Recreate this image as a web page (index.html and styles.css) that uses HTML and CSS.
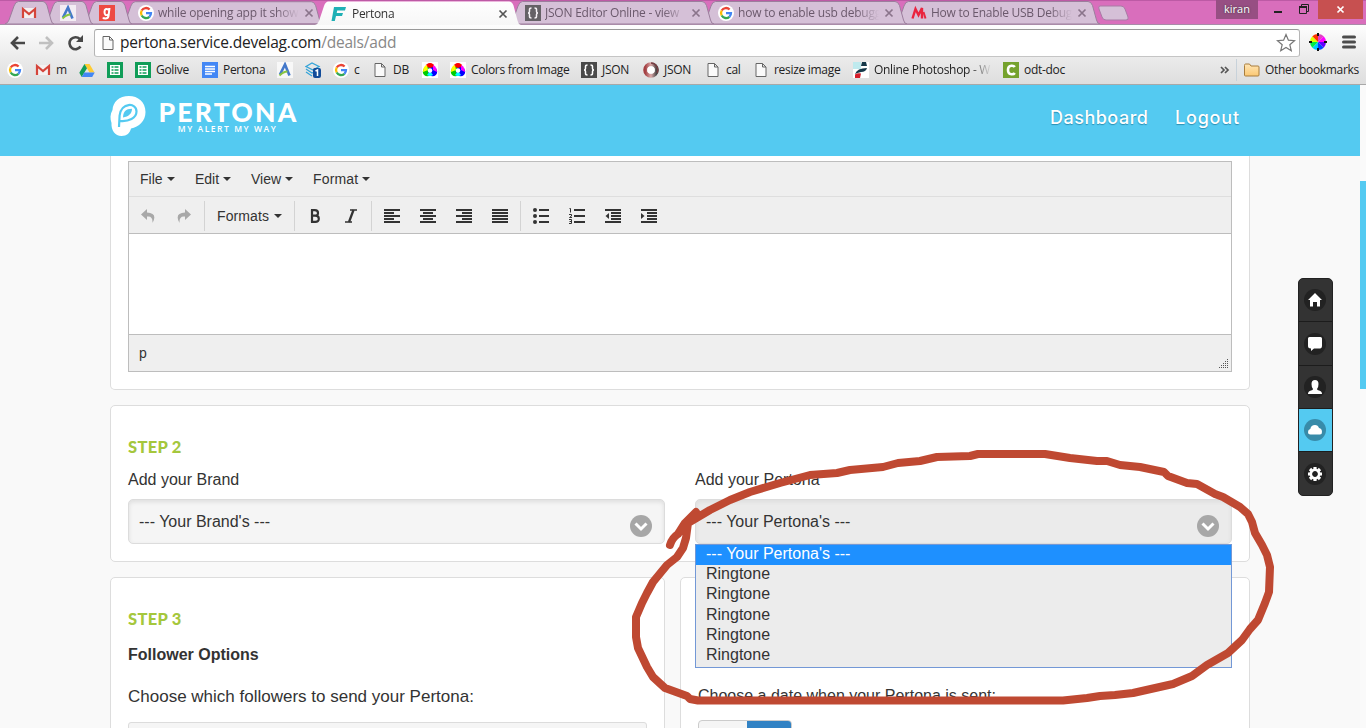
FILE: index.html
```html
<!DOCTYPE html>
<html lang="en">
<head>
<meta charset="utf-8">
<title>Pertona</title>
<link rel="stylesheet" href="styles.css">
</head>
<body>
<svg class="defs" aria-hidden="true">
  <defs>
    <linearGradient id="toolGrad" x2="0" y2="1"><stop stop-color="#fefefe"/><stop offset="1" stop-color="#f7f7f7"/></linearGradient>
    <linearGradient id="folderGrad" x2="0" y2="1"><stop stop-color="#ffe6b5"/><stop offset="1" stop-color="#fbc873"/></linearGradient>
    <linearGradient id="ringGrad"><stop stop-color="#a33f42"/><stop offset=".5" stop-color="#dba9a9"/><stop offset="1" stop-color="#444"/></linearGradient>
  </defs>
  <symbol id="google" viewBox="0 0 16 16"><circle cx="8" cy="8" r="8" fill="#fff"/><g fill="none" stroke-width="2.3"><path d="M11.6 4.5A5 5 0 0 0 3.7 5.5" stroke="#ea4335"/><path d="M3.7 5.5a5 5 0 0 0 0 5" stroke="#fbbc05"/><path d="M3.7 10.5a5 5 0 0 0 7.7 1.3" stroke="#34a853"/><path d="M11.4 11.8A5 5 0 0 0 13 8.1H8" stroke="#4285f4"/></g></symbol>
  <symbol id="gmail" viewBox="0 0 16 16"><path d="M2 3h12v10H2z" fill="#f4f0f0"/><path d="M2 13V4l6 5 6-5v9" fill="none" stroke="#d5443a" stroke-width="2.2"/></symbol>
  <symbol id="aicon" viewBox="0 0 16 16"><path d="M0 0h16v16H0z" fill="#fff" fill-opacity=".7"/><path d="M3 12.500 8 2.500l4.500 11" fill="none" stroke="#4378ca" stroke-width="2.600"/><path d="M2.500 13.500q4-4 8-4" fill="none" stroke="#87c540" stroke-width="2"/></symbol>
  <symbol id="gicon" viewBox="0 0 16 16"><path d="M0 0h16v16H0z" fill="#ee4a43"/><path d="M10.500 3 9.500 11q-.5 2.500-3 2.500-2 0-2.500-1M10 5Q5.500 2.500 5.500 7t4 2.500" fill="none" stroke="#fff" stroke-width="2"/></symbol>
  <symbol id="drive" viewBox="0 0 16 16"><path d="M5.500 2h5l5 8.500h-5z" fill="#fc3"/><path d="M5.500 2 8 6.300 2.700 15 .3 10.800z" fill="#119d59"/><path d="M5.300 10.500h10.400L13.200 15H2.700z" fill="#4387f5"/></symbol>
  <symbol id="sheets" viewBox="0 0 16 16"><path d="M0 0h16v16H0z" fill="#109d58"/><path d="M3 3h10v10H3z" fill="#fff"/><path d="M4.500 5h2m1 0h4m-7 3h2m1 0h4m-7 3h2m1 0h4" stroke="#109d58" stroke-width="1.600"/></symbol>
  <symbol id="docs" viewBox="0 0 16 16"><path d="M0 0h16v16H0z" fill="#4387f5"/><path d="M3 4.500h10M3 7h10M3 9.500h10M3 12h7" stroke="#fff" stroke-width="1.400"/></symbol>
  <symbol id="stack" viewBox="0 0 16 16"><path d="M1 4.500 7 1l7 3.500L8 8zM1 7l6 4 2-1M1 10l6 4" fill="none" stroke="#34a4d8" stroke-width="1.300"/><rect x="8" y="6" width="8" height="10" rx="2" fill="#124c99"/><path d="m10.500 9 2-1v6" fill="none" stroke="#fff" stroke-width="1.500"/></symbol>
  <symbol id="page" viewBox="0 0 16 16"><path d="M3 1.500h6.500L13 5v9.500H3zM9.500 1.500V5H13" fill="#fafafa" stroke="#666"/></symbol>
  <symbol id="rgb" viewBox="0 0 16 16"><path d="M0 0h16v16H0z" fill="#fff"/><circle cx="8" cy="5.500" r="4.500" fill="#f00"/><circle cx="5.300" cy="9.700" r="4.500" fill="#0c0"/><circle cx="10.700" cy="9.700" r="4.500" fill="#00f"/><path d="M5 3Q1 4 1 10l5-2z" fill="#ff0"/><path d="M11 3q4 2 4 7l-4-2z" fill="#f0f"/><path d="M5 13q3 2 6 0l-3-4z" fill="#0ff"/><circle cx="8" cy="8.500" r="2.300" fill="#fff"/></symbol>
  <symbol id="json" viewBox="0 0 16 16"><path d="M0 0h16v16H0z" fill="#4a4a4a"/><path d="M6.500 3q-2 0-2 1.500v2Q4.500 8 3 8q1.500 0 1.500 1.500v2q0 1.500 2 1.500M9.500 3q2 0 2 1.500v2Q11.500 8 13 8q-1.500 0-1.500 1.500v2q0 1.500-2 1.500" fill="none" stroke="#fff" stroke-width="1.500"/></symbol>
  <symbol id="ring" viewBox="0 0 16 16"><circle cx="8" cy="8" r="5.800" fill="none" stroke="url(#ringGrad)" stroke-width="4"/><circle cx="8" cy="8" r="3.800" fill="#fff"/><path d="M8 1a7 7 0 0 1 6 10" fill="none" stroke="#783f43" stroke-width="1.500"/></symbol>
  <symbol id="photo" viewBox="0 0 16 16"><path d="M0 0h16v16H0z" fill="#fff"/><path d="M0 0h8v7H0z" fill="#bfeaee"/><path d="M9 0h4l1 4H8zM2 12q2-6 12-6-1 4-6 4-4 1-6 2z" fill="#153848"/><path d="M2 12.500q3-2 6-1L7 16H2z" fill="#d51f2c"/></symbol>
  <symbol id="camt" viewBox="0 0 16 16"><path d="M0 0h16v16H0z" fill="#75a22d"/><path d="M11.800 5q-1-1.500-3.300-1.300Q5 4 5 8t3.500 4.300q2.300.2 3.300-1.300" fill="none" stroke="#fff" stroke-width="2.600"/></symbol>
  <symbol id="folder" viewBox="0 0 16 16"><path d="M.5 3.500q0-1.500 1-1.500h4l1.500 2h7q1 0 1 1v8q0 1-1 1h-12.500q-1 0-1-1z" fill="url(#folderGrad)" stroke="#a97d3c"/></symbol>
  <symbol id="ficon" viewBox="0 0 16 16"><path d="M3 1h12l-1 3.500H6.200L5.700 7H12l-1 3H5L3.800 15H.5z" fill="#1eb0b5"/></symbol>
  <symbol id="micon" viewBox="0 0 16 16"><path d="M1.500 13.500 4.500 4 7.500 10 11 3v10.500" fill="none" stroke="#e9243f" stroke-width="2.400"/><path d="m12.500 7 2 6.500" stroke="#e9243f" stroke-width="2"/></symbol>
  <symbol id="close" viewBox="0 0 10 10"><path d="m1.500 1.500 7 7m0-7-7 7" fill="none" stroke="currentColor" stroke-width="1.700"/></symbol>
  <symbol id="pin" viewBox="0 0 49 24"><path d="M0 24q3-1 4-4l5-14q1.500-4.500 4.500-4.500H38q2.500 0 4 4l4 14.500q1 4 3 4z" fill="#d5c0d7" stroke="#9c7e9d"/></symbol>
  <symbol id="wide" viewBox="0 0 205 24"><path d="M0 24q3-1 4-4l5-14q1.500-4.500 4.500-4.500H193q3 0 4.500 4l4 14.500q1 4 3.500 4z" fill="#d5c0d7" stroke="#9c7e9d"/></symbol>
  <symbol id="chev" viewBox="0 0 22 22"><circle cx="11" cy="11" r="11" fill="#a7a7a7"/><path d="m5.500 8.500 5.500 5.500 5.500-5.500" fill="none" stroke="#fff" stroke-width="3"/></symbol>
</svg>

<header class="browser">
  <div class="tabstrip">
    <div class="tab pinned t1"><svg class="shape"><use href="#pin"/></svg><svg class="ico"><use href="#gmail"/></svg></div>
    <div class="tab pinned t2"><svg class="shape"><use href="#pin"/></svg><svg class="ico"><use href="#aicon"/></svg></div>
    <div class="tab pinned t3"><svg class="shape"><use href="#pin"/></svg><svg class="ico"><use href="#gicon"/></svg></div>
    <div class="tab t4"><svg class="shape"><use href="#wide"/></svg><svg class="ico"><use href="#google"/></svg><span class="title s-while">while opening app it show</span><svg class="x"><use href="#close"/></svg></div>
    <div class="tab active"><svg class="shape" viewBox="0 0 206 25"><path d="M0 25q3-1 4-4L9 6q1.500-4.500 4.500-4.500H194q3 0 4.500 4l4 15q1 4 3.500 4.500z" fill="url(#toolGrad)"/></svg><svg class="ico"><use href="#ficon"/></svg><span class="title s-pert">Pertona</span><svg class="x"><use href="#close"/></svg></div>
    <div class="tab t6"><svg class="shape"><use href="#wide"/></svg><svg class="ico dim"><use href="#json"/></svg><span class="title s-json">JSON Editor Online - view</span><svg class="x"><use href="#close"/></svg></div>
    <div class="tab t7"><svg class="shape"><use href="#wide"/></svg><svg class="ico"><use href="#google"/></svg><span class="title s-usb">how to enable usb debugg</span><svg class="x"><use href="#close"/></svg></div>
    <div class="tab t8"><svg class="shape"><use href="#wide"/></svg><svg class="ico"><use href="#micon"/></svg><span class="title s-how">How to Enable USB Debug</span><svg class="x"><use href="#close"/></svg></div>
    <svg class="newtab" viewBox="0 0 34 16"><path d="M3 1h21q3 0 4 3l3 8q1 3-2 3H9q-3 0-4-3L2 4Q1 1 3 1z" fill="#d5c0d7" stroke="#a97aa5"/></svg>
    <div class="winctl">
      <span class="user">kiran</span>
      <svg width="60" height="19"><path d="M16 12h8" stroke="#222" stroke-width="2"/><path d="M41.500 6.500h7v7h-7zM43.500 6V4.500h7v7H49" fill="none" stroke="#222"/><path d="M41 7h8" stroke="#222" stroke-width="2"/></svg>
      <span class="winclose"><svg width="10" height="10"><path d="m1.500 1.500 6 6m0-6-6 6" stroke="#fff" stroke-width="1.700"/></svg></span>
    </div>
  </div>

  <div class="addressbar">
    <svg class="nav" viewBox="0 0 94 30"><g fill="none" stroke-width="2.600"><path d="M25 17H12m6-6-6 6 6 6" stroke="#484848"/><path d="M39 17h13m-6-6 6 6-6 6" stroke="#c0c0c0"/><path d="M80.500 20.500A6 6 0 1 1 79.800 13" stroke="#484848"/></g><path d="M83 9v7h-7z" fill="#484848"/></svg>
    <div class="omnibox">
      <svg class="ico"><use href="#page"/></svg>
      <span class="url">pertona.service.develag.com<span class="path">/deals/add</span></span>
      <svg class="star" viewBox="0 0 20 20"><path d="m10 1.500 2.400 5.700 6.100.5-4.700 4 1.500 6-5.300-3.200-5.300 3.200 1.500-6-4.700-4 6.100-.5z" fill="#fff" stroke="#777" stroke-width="1.200"/></svg>
    </div>
    <svg class="wheel" viewBox="-10 -10 20 20"><path d="M0 0V-8A8 8 0 0 1 5.700-5.700z" fill="#e040c0"/><path d="M0 0 5.700-5.700A8 8 0 0 1 8 0z" fill="#f0f"/><path d="M0 0h8A8 8 0 0 1 5.700 5.700z" fill="#60f"/><path d="M0 0 5.700 5.700A8 8 0 0 1 0 8z" fill="#04f"/><path d="M0 0v8A8 8 0 0 1-5.700 5.700z" fill="#0cf"/><path d="m0 0-5.700 5.700A8 8 0 0 1-8 0z" fill="#0e4"/><path d="M0 0h-8A8 8 0 0 1-5.700-5.700z" fill="#df0"/><path d="m0 0-5.700-5.700A8 8 0 0 1 0-8z" fill="#f30"/><path d="M-9 0h3m12 0h3M0-9v3M0 6v3" stroke="#111" stroke-width="2"/></svg>
    <svg class="menu" viewBox="0 0 13 14"><path d="M1 2h11M1 7h11M1 12h11" stroke="#4c4c4c" stroke-width="3" stroke-linecap="round"/></svg>
  </div>

  <nav class="bookmarks">
    <span class="bm w28"><svg class="ico"><use href="#google"/></svg></span>
    <span class="bm w44"><svg class="ico"><use href="#gmail"/></svg>m</span>
    <span class="bm w28"><svg class="ico"><use href="#drive"/></svg></span>
    <span class="bm w28"><svg class="ico"><use href="#sheets"/></svg></span>
    <span class="bm w67"><svg class="ico"><use href="#sheets"/></svg>Golive</span>
    <span class="bm w75"><svg class="ico"><use href="#docs"/></svg>Pertona</span>
    <span class="bm w28"><svg class="ico"><use href="#aicon"/></svg></span>
    <span class="bm w28"><svg class="ico"><use href="#stack"/></svg></span>
    <span class="bm w39"><svg class="ico"><use href="#google"/></svg>c</span>
    <span class="bm w50"><svg class="ico"><use href="#page"/></svg>DB</span>
    <span class="bm w28"><svg class="ico"><use href="#rgb"/></svg></span>
    <span class="bm w131"><svg class="ico"><use href="#rgb"/></svg>Colors from Image</span>
    <span class="bm w62"><svg class="ico"><use href="#json"/></svg>JSON</span>
    <span class="bm w62"><svg class="ico"><use href="#ring"/></svg>JSON</span>
    <span class="bm w48"><svg class="ico"><use href="#page"/></svg>cal</span>
    <span class="bm w100"><svg class="ico"><use href="#page"/></svg>resize image</span>
    <span class="bm w150"><svg class="ico"><use href="#photo"/></svg><span class="fade">Online Photoshop - W</span></span>
    <span class="bm"><svg class="ico"><use href="#camt"/></svg>odt-doc</span>
    <span class="more"><svg width="10" height="8"><path d="m1 1 3 3-3 3m4-6 3 3-3 3" fill="none" stroke="#555" stroke-width="1.700"/></svg></span>
    <span class="bm other"><svg class="ico"><use href="#folder"/></svg>Other bookmarks</span>
  </nav>
</header>

<main class="site">
  <div class="sitebar">
    <div class="brand">
      <svg class="logo" viewBox="0 0 36 40"><path d="M19 0C9 0 3 6 2.500 14 0 18 0 23 1.500 27 1 34 5 40 11.500 40 17 40 20 37 21 32.500 29 31 35.500 25 35.500 16 35.500 6 28 0 19 0z" fill="#fff"/><path d="M9 24.800C19 26 26.500 22 26.500 15.500 26.500 6 11 6.500 9.600 19.500L9 31" fill="none" stroke="#54caf1" stroke-width="2.200"/><path d="M13 21.500C13.200 16 15.500 12.800 22 12.800 22 17.500 18.500 20.800 13 21.500z" fill="#54caf1"/></svg>
      <div class="wordmark"><strong>PERTONA</strong><small>MY ALERT MY WAY</small></div>
    </div>
    <nav class="links"><a class="dash">Dashboard</a><a class="logout">Logout</a></nav>
  </div>

  <div class="content">
    <section class="card first">
      <div class="editor">
        <div class="menubar"><span class="m1">File<i></i></span><span class="m2">Edit<i></i></span><span class="m3">View<i></i></span><span class="m4">Format<i></i></span></div>
        <div class="tools">
          <div class="group undo">
            <svg viewBox="0 0 14 14"><path d="M6 0 0 5.500 6 11V7.500q6-1 5.500 6.500Q17 4 6 3.500z" fill="#a8a8a8"/></svg>
            <svg viewBox="0 0 14 14"><path d="m8 0 6 5.500L8 11V7.500Q2 6.500 2.500 14-3 4 8 3.500z" fill="#a8a8a8"/></svg>
          </div>
          <div class="group formats">Formats<i></i></div>
          <div class="group bi">
            <svg viewBox="0 0 12 14"><path d="M2 1.200h3.800Q9 1.200 9 4T5.800 6.700H3.500h2.700q3.600 0 3.600 3.100t-3.600 3H2M3 .5v13" fill="none" stroke="#333" stroke-width="2.200"/></svg>
            <svg viewBox="0 0 12 14"><path d="M5 1h7M0 13h7" stroke="#333" stroke-width="1.500"/><path d="M8.500 1 4 13" stroke="#333" stroke-width="2.300"/></svg>
          </div>
          <div class="group align">
            <svg viewBox="0 0 16 15"><path d="M0 1h16M0 4h10M0 7h16M0 10h10M0 13h16"/></svg>
            <svg viewBox="0 0 16 15"><path d="M0 1h16M3 4h10M0 7h16M3 10h10M0 13h16"/></svg>
            <svg viewBox="0 0 16 15"><path d="M0 1h16M6 4h10M0 7h16M6 10h10M0 13h16"/></svg>
            <svg viewBox="0 0 16 15"><path d="M0 1h16M0 4h16M0 7h16M0 10h16M0 13h16"/></svg>
          </div>
          <div class="group lists">
            <svg viewBox="0 0 16 15"><path d="M6 1h10M6 7h10M6 13h10"/><g fill="#333"><circle cx="2" cy="1" r="2"/><circle cx="2" cy="7" r="2"/><circle cx="2" cy="13" r="2"/></g></svg>
            <svg viewBox="0 0 16 15"><path d="M5 1h11M5 7h11M5 13h11"/><path class="thin" d="M.5-.5h1v4M0 5.500h2.500V7L.5 8.500H3M0 10.500h2.500v4H0m.5-2h2"/></svg>
            <svg viewBox="0 0 16 15"><path d="M0 1h16M6 4h10M6 7h10M6 10h10M0 13h16"/><path d="M4 4v6L.5 7z" class="fill"/></svg>
            <svg viewBox="0 0 16 15"><path d="M0 1h16M6 4h10M6 7h10M6 10h10M0 13h16"/><path d="M0 4v6l3.500-3z" class="fill"/></svg>
          </div>
        </div>
        <div class="writing"></div>
        <div class="status"><span>p</span><svg width="10" height="10" viewBox="0 0 10 10"><path d="M9.500 0v10M7.500 2v8M5.500 4v6M3.500 6v4M1.500 8v2" stroke="#555" stroke-dasharray="1 1"/></svg></div>
      </div>
    </section>

    <section class="card second">
      <div class="half">
        <h2>STEP 2</h2>
        <label>Add your Brand</label>
        <div class="select"><span>--- Your Brand's ---</span><svg><use href="#chev"/></svg></div>
      </div>
      <div class="half">
        <h2>&nbsp;</h2>
        <label>Add your Pertona</label>
        <div class="select open"><span>--- Your Pertona's ---</span><svg><use href="#chev"/></svg>
          <ul class="options"><li class="on">--- Your Pertona's ---</li><li>Ringtone</li><li>Ringtone</li><li>Ringtone</li><li>Ringtone</li><li>Ringtone</li></ul>
        </div>
      </div>
    </section>

    <div class="row">
      <section class="card followers">
        <h2>STEP 3</h2>
        <h3>Follower Options</h3>
        <p>Choose which followers to send your Pertona:</p>
        <div class="field"></div>
      </section>
      <section class="card schedule">
        <p>Choose a date when your Pertona is sent:</p>
        <div class="switch"><span></span><span class="blue"></span></div>
      </section>
    </div>
  </div>

  <aside class="dock">
    <span><svg viewBox="-11 -11 22 22"><circle r="11"/><path d="M0-7 7 0H5v6.500H2V2h-4v4.500h-3V0h-2z"/></svg></span>
    <span><svg viewBox="-11 -11 22 22"><circle r="11"/><path d="M-5.500-7h11Q7-7 7-5.500v7Q7 4.500 5 4.500H-1L-4 7V4.500Q-7 4.500-7 2v-7.500Q-7-7-5.500-7z"/></svg></span>
    <span><svg viewBox="-11 -11 22 22"><circle r="11"/><path d="M0-7q3.500 0 3.500 4Q3.500.500 2 2q0 1 2 1.500 3 .5 3 3.500H-7q0-3 3-3.500 2-.5 2-1.500-1.500-1.500-1.500-5Q-3.500-7 0-7z"/></svg></span>
    <span class="current"><svg viewBox="-11 -11 22 22"><circle r="11"/><path d="M-4.500 4.500Q-7 4.500-7 2q0-2.500 2.300-3Q-4-5 0-5q3 0 4 3 3 .5 3 4Q7 4.500 5 4.500z"/></svg></span>
    <span><svg viewBox="-11 -11 22 22"><circle r="11"/><g fill="none" stroke="#fff"><circle r="4.200" class="gear"/><path d="M0-7v2.500M0 7V4.500M-7 0h2.500M7 0H4.500M-5-5l1.600 1.600M5-5 3.400-3.400M-5 5l1.600-1.600M5 5 3.400 3.400" stroke-width="3.200"/></g></svg></span>
  </aside>
  <div class="scrollbar"><div class="thumb"></div></div>
</main>

<svg class="marker" viewBox="0 0 1366 728"><path d="M670 545Q672 538 678 534L685 523 696 512M688 523 710 510 730 500 750 492 780 483 810 475 837 473 850 470 883 467 898 463 920 461 937 457 970 456 978 454H1045L1070 458 1097 461H1107L1120 465 1140 467 1164 472 1168 476 1187 483 1197 484 1215 494 1223 497 1240 507 1248 514 1252 522 1255 533 1262 545 1267 555 1270 567 1269 592 1265 603 1258 620 1250 629 1242 640 1228 653 1207 665 1192 676 1173 684 1133 693 1115 695 1100 696 1087 698 1063 700.500H698L690 699 687 696 665 688 653 677 647 667 638 648 636 637V617L642 603 647 593 653 582 667 565 677 557 683 548 686 538 688 523"/></svg>
</body>
</html>
```
FILE: styles.css
```css
* { box-sizing: border-box; }
body { margin: 0; height: 728px; overflow: hidden; position: relative; background: #f9f9f9; color: #333; font-family: "Liberation Sans", Arial, sans-serif; font-size: 16px; }
.defs { position: absolute; width: 0; height: 0; }
h2, h3, p, ul { margin: 0; padding: 0; }
.ico { width: 16px; height: 16px; flex: none; }

/* Browser frame */
.browser { height: 85px; border-bottom: 1px solid #a8a8a8; background: linear-gradient(#fefefe 24px, #ebebeb 58px, #dedede); font-family: "Open Sans", "Noto Sans", sans-serif; font-size: 12px; color: #222; }
.tabstrip { display: flex; height: 25px; padding-left: 5px; background: #d96ebc; border-bottom: 1px solid #a98ba8; border-top: 1px solid #bd5aa5; }
.tab { position: relative; isolation: isolate; display: flex; align-items: center; flex: none; width: 205px; height: 24px; margin-right: -12px; margin-top: -1px; padding: 2px 0 0 16px; color: #6b596c; }
.tab .shape { position: absolute; inset: 0; width: 100%; height: 100%; z-index: -1; }
.pinned { width: 49px; margin-right: -10px; }
.t1 { z-index: 8; } .t2 { z-index: 7; } .t3 { z-index: 6; } .t4 { z-index: 5; width: 201px; margin-right: -8px; }
.t6 { z-index: 4; } .t7 { z-index: 3; } .t8 { z-index: 2; }
.tab.active { z-index: 9; width: 206px; height: 25px; margin-right: -12px; color: #333; }
.dim { opacity: .8; }
.title { width: 141px; margin: -1px 0 0 4px; overflow: hidden; white-space: nowrap; -webkit-mask-image: linear-gradient(90deg, #000 118px, transparent 141px); mask-image: linear-gradient(90deg, #000 118px, transparent 141px); }
.s-while { letter-spacing: -.22px; } .s-pert { letter-spacing: -.3px; margin-left: 5px; } .s-json { letter-spacing: -.23px; } .s-usb { letter-spacing: -.2px; } .s-how { letter-spacing: -.25px; }
.x { width: 10px; height: 10px; margin-left: 5px; color: #8a748b; }
.active .x { color: #555; }
.newtab { width: 34px; height: 16px; margin: 4px 0 0 9px; }
.winctl { display: flex; margin: -1px 3px 0 auto; height: 19px; }
.user { width: 42px; background: #974f83; color: #fff; font: 11px/18px "Open Sans", sans-serif; text-align: center; text-shadow: 0 0 2px #333; }
.winclose { display: flex; align-items: center; justify-content: center; width: 45px; background: #c75050; }
.addressbar { display: flex; align-items: center; height: 33px; }
.nav { width: 94px; height: 30px; flex: none; margin-top: -1px; }
.omnibox { display: flex; align-items: center; width: 1206px; height: 28px; margin-top: 2px; padding: 0 3px 0 5px; background: #fff; border: 1px solid #b3b3b3; border-color: #999 #b5b5b5 #c5c5c5; border-radius: 3px; }
.url { flex: 1; margin: -2px 0 0 4px; font-size: 15.500px; line-height: 22px; letter-spacing: -.2px; color: #222; }
.path { color: #888; }
.star { width: 20px; height: 20px; }
.wheel { width: 20px; height: 20px; margin-left: 8px; }
.menu { width: 14px; height: 14px; margin-left: 14px; }
.bookmarks { display: flex; align-items: center; height: 25px; padding: 0 8px 1px 7px; letter-spacing: -.3px; }
.bm { display: flex; gap: 5px; flex: none; white-space: nowrap; line-height: 16px; }
.w28 { width: 28px; } .w39 { width: 39px; } .w44 { width: 44px; } .w48 { width: 48px; } .w50 { width: 50px; } .w62 { width: 62px; }
.w67 { width: 67px; } .w75 { width: 75px; } .w100 { width: 100px; } .w131 { width: 131px; } .w150 { width: 150px; }
.fade { width: 118px; overflow: hidden; -webkit-mask-image: linear-gradient(90deg, #000 95px, transparent); mask-image: linear-gradient(90deg, #000 95px, transparent); }
.more { margin-left: auto; width: 17px; height: 22px; display: flex; align-items: center; border-right: 1px solid #c8d2da; }
.other { margin-left: 7px; width: 114px; }

/* Site header */
.site { position: relative; height: 643px; overflow: hidden; }
.sitebar { position: relative; display: flex; justify-content: space-between; width: 1360px; height: 71px; padding: 0 120px 0 110px; background: #54caf1; color: #fff; }
.brand { display: flex; gap: 12px; margin-top: 11px; }
.logo { width: 36px; height: 40px; }
.wordmark { display: flex; flex-direction: column; align-items: center; width: 139px; white-space: nowrap; }
.wordmark strong { font: 900 26.500px/24px Lato, sans-serif; letter-spacing: 2.200px; margin: 4px -2px 0 0; }
.wordmark small { font: 600 8.500px/10px "Open Sans", sans-serif; letter-spacing: 1.550px; margin-top: 0; }
.links { display: flex; gap: 27px; font: 500 18px/24px Inter, sans-serif; margin-top: 21px; text-shadow: 0 1px 1px #2b8fb3; }
.dash { width: 98px; letter-spacing: .5px; } .logout { width: 65px; letter-spacing: .8px; }

/* Content */
.content { width: 1140px; margin-left: 110px; }
.card { background: #fff; border: 1px solid #ddd; border-radius: 5px; padding: 0 17px; }
.first { height: 234px; padding-top: 5px; border-top: 0; border-radius: 0 0 5px 5px; }
.editor { width: 1104px; height: 211px; border: 1px solid #bdbdbd; background: #efefef; font-size: 14px; }
.menubar { display: flex; height: 35px; padding: 0 11px; border-bottom: 1px solid #dedede; line-height: 34px; }
.menubar i, .formats i { display: inline-block; margin-left: 4px; vertical-align: 3px; border: 4px solid transparent; border-top-color: #333; border-bottom: 0; }
.m1 { width: 55px; } .m2 { width: 56px; } .m3 { width: 62px; } .m4 { letter-spacing: .15px; }
.tools { display: flex; align-items: center; height: 36px; padding-top: 2px; }
.group { display: flex; align-items: center; height: 30px; border-right: 1px solid #d3d3d3; }
.undo { width: 76px; gap: 22px; padding-left: 12px; } .undo svg { width: 14px; height: 14px; }
.formats { width: 90px; padding-left: 12px; letter-spacing: .1px; } .formats i { margin-left: 5px; }
.bi { width: 77px; gap: 24px; padding-left: 14px; } .bi svg { width: 12px; height: 14px; }
.align { width: 149px; gap: 20px; padding-left: 12px; } .lists { gap: 20px; padding-left: 12px; border: 0; }
.align svg, .lists svg { width: 16px; height: 15px; overflow: visible; fill: none; stroke: #333; stroke-width: 2; }
.lists circle, .lists .fill { stroke: none; } .lists .thin { stroke-width: 1; }
.lists .fill { fill: #333; }
.writing { height: 102px; background: #fff; border: solid #bdbdbd; border-width: 1px 0; }
.status { display: flex; align-items: flex-end; justify-content: space-between; height: 36px; padding: 0 3px 2px 10px; line-height: 32px; }
h2 { height: 20px; font: 900 16.500px/20px Lato, sans-serif; color: #a5c73c; letter-spacing: .3px; }
.second { display: flex; justify-content: space-between; height: 157px; margin-top: 15px; padding-top: 31px; }
.half { width: 537px; }
.second label { display: block; margin: 13px 0 9px; line-height: 20px; }
.select { position: relative; display: flex; justify-content: space-between; height: 45px; padding: 12px 12px 0 10px; background: #f5f5f5; border: 1px solid #dcdcdc; border-radius: 5px; box-shadow: inset 0 2px 4px #ddd; line-height: 20px; }
.select svg { width: 22px; height: 22px; margin-top: 3px; }
.open { background: #ebebeb; }
.options { position: absolute; z-index: 2; top: 44px; left: -1px; width: 537px; height: 124px; list-style: none; background: #ececec; border: 1px solid #7398d6; }
.options li { height: 20.200px; padding-left: 10px; line-height: 18px; }
.options .on { background: #1e90ff; color: #fff; }
.row { display: flex; gap: 15px; margin-top: 15px; }
.row .card { height: 180px; }
.followers { width: 555px; padding-top: 31px; }
.followers h3 { margin: 16px 0 22px; font-size: 16px; line-height: 20px; }
.followers p { font-size: 17px; line-height: 20px; }
.field { width: 519px; height: 40px; margin-top: 15px; background: #f5f5f5; border: 1px solid #dcdcdc; border-radius: 3px; }
.schedule { flex: 1; padding-top: 108px; }
.schedule p { line-height: 20px; }
.switch { display: flex; width: 94px; height: 34px; margin-top: 14px; border: 1px solid #ccc; border-radius: 4px; overflow: hidden; background: #f5f5f5; }
.switch span { width: 48px; } .switch .blue { flex: 1; margin: -1px -1px 0 0; background: #3182c4; }

/* Floating elements */
.dock { position: absolute; left: 1298px; top: 193px; width: 35px; height: 218px; display: grid; grid-template-rows: 43px 44px 43px 43px 1fr; overflow: hidden; background: #333; border: 1px solid #222; border-radius: 5px; }
.dock span { display: flex; align-items: center; justify-content: center; padding-right: 1px; border-bottom: 1px solid #1c1c1c; }
.dock span:last-child { border: 0; }
.dock svg { width: 22px; height: 22px; } .dock svg > circle { fill: #222; } .dock svg > path { fill: #fff; }
.dock .gear { stroke-width: 2.600; }
.dock .current { background: #54caf1; } .dock .current svg > circle { fill: #388ba9; }
.scrollbar { position: absolute; left: 1360px; top: 0; width: 6px; height: 643px; background: #fafafa; }
.thumb { height: 208px; margin-top: 96px; background: #54caf1; }
.marker { position: absolute; z-index: 20; inset: 0; width: 1366px; height: 728px; pointer-events: none; fill: none; stroke: #bf4932; stroke-width: 8; stroke-linejoin: round; stroke-linecap: round; }
```
